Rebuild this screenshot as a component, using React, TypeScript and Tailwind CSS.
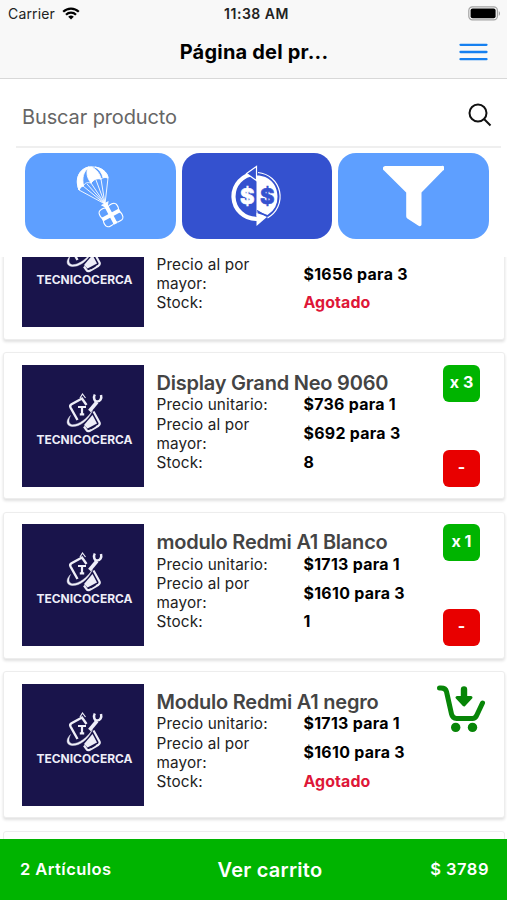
import React from 'react';

interface Product {
  id: number;
  name: string;
  unitPrice: string;
  bulkPrice: string;
  stock: number;
  quantity: number;
}

const PRODUCTS: Product[] = [
  { id: 1, name: '', unitPrice: '', bulkPrice: '$1656 para 3', stock: 0, quantity: 0 },
  { id: 2, name: 'Display Grand Neo 9060', unitPrice: '$736 para 1', bulkPrice: '$692 para 3', stock: 8, quantity: 3 },
  { id: 3, name: 'modulo Redmi A1 Blanco', unitPrice: '$1713 para 1', bulkPrice: '$1610 para 3', stock: 1, quantity: 1 },
  { id: 4, name: 'Modulo Redmi A1 negro', unitPrice: '$1713 para 1', bulkPrice: '$1610 para 3', stock: 0, quantity: 0 },
];

const WifiIcon = () => (
  <svg width="18" height="13" viewBox="0 0 18 13" fill="none" stroke="#000" strokeWidth="2.2">
    <path d="M1.2 4.8a11 11 0 0 1 15.6 0" />
    <path d="M4 7.8a7 7 0 0 1 10 0" />
    <path d="M9 12.6 6.2 9.8a4 4 0 0 1 5.6 0z" fill="#000" stroke="none" />
  </svg>
);

const BatteryIcon = () => (
  <svg width="33" height="15" viewBox="0 0 33 15">
    <rect x="0.8" y="0.8" width="28.6" height="13" rx="3.6" fill="#f8f8f8" stroke="#a3a3a3" strokeWidth="1.2" />
    <rect x="2.6" y="2.6" width="25" height="9.6" rx="2" fill="#000" />
    <path d="M30.8 5v5c1.4-.8 1.4-4.2 0-5z" fill="#8c8c8c" />
  </svg>
);

const MenuIcon = () => (
  <svg width="29" height="18" viewBox="0 0 29 18" stroke="#1680f0" strokeWidth="2.3" strokeLinecap="round">
    <path d="M1.500 1.800h26M1.500 9h26M1.500 16.200h26" />
  </svg>
);

const ParachuteIcon = () => (
  <svg width="50" height="64" viewBox="0 0 50 64" fill="none" stroke="#fff" strokeWidth="0.9">
    {/* canopy */}
    <path d="M4 26C-1 13 6 4 15 3c10-1 18 5 18 11-3-1-5-.5-7 1-4-1-7 0-10 4-4-1-6 0-8 3-2 0-3 2-4 4z" />
    <path d="M4 26C-1 13 6 4 14 3 8 8 7 14 8.500 22c-2 0-3.500 2-4.500 4z" fill="#fff" />
    <path d="M13 3h4c5 3 8 7 9 12-4-1-7 0-10 4-4-5-5-10-3-16z" fill="#fff" />
    <path d="M20 3c7 1 12 5 13 11-2-1-3.500-1-5-.5C27 9 24 5 20 3z" fill="#fff" />
    {/* ropes */}
    <path d="M4 26l26 14M8 22l22 18M12 20l18 20M16 19l14 21M21 16l9 24M26 15l4 25M33 14l-3 26" />
    {/* parcel */}
    <g transform="rotate(-28 36 51)">
      <rect x="26" y="41.500" width="10" height="9.500" rx="4" strokeWidth="1.200" />
      <rect x="36" y="41.500" width="10" height="9.500" rx="4" strokeWidth="1.200" />
      <rect x="26" y="51" width="10" height="9.500" rx="4" strokeWidth="1.200" />
      <rect x="36" y="51" width="10" height="9.500" rx="4" strokeWidth="1.200" />
      <path d="M36 40v21M26 51h20" strokeWidth="4" />
      <path d="M36 43l-3.500-5h7z" fill="#fff" />
    </g>
  </svg>
);

const ExchangeIcon = () => (
  <svg width="52" height="62" viewBox="0 0 52 62" fill="none">
    <path d="M26 10.500c12 0 20.500 9 20.500 21a21 21 0 0 1-10 18.500L26 46z" fill="#fff" />
    <path d="M24 8.800a22.500 22.500 0 0 0 2 45" stroke="#fff" strokeWidth="4.200" />
    <path d="M25.500 48v13l11-9.500z" fill="#fff" />
    <path d="M26 11v40" stroke="#fff" />
    <path d="M27 7.500a24.300 24.300 0 0 1 9.500 45.500" stroke="#fff" strokeWidth="1.200" />
    <path d="M26 45.500l10 6" stroke="#3451cf" strokeWidth="1.200" />
    <path d="M25.500 1.500v14l-10-7z" fill="#3451cf" stroke="#fff" strokeWidth="1.200" />
    <text x="9" y="39" fontFamily="Inter, sans-serif" fontWeight="800" fontSize="22" fill="#fff" stroke="#fff" strokeWidth=".6">$</text>
    <text x="29" y="39" fontFamily="Inter, sans-serif" fontWeight="800" fontSize="22" fill="#3451cf" stroke="#3451cf" strokeWidth=".6">$</text>
  </svg>
);

const FunnelIcon = () => (
  <svg width="61" height="62" viewBox="0 0 61 62" fill="#fff">
    <path d="M2.600 1H58.400a2.300 2.300 0 0 1 1.600 4.600L38.500 27.500V59.500a1.800 1.800 0 0 1-3 1.300L24.300 53.500a3 3 0 0 1-1.100-2.300V27.500L1 5.600A2.500 2.500 0 0 1 2.600 1z" />
  </svg>
);

const CartDownIcon = () => (
  <svg width="50" height="50" viewBox="0 0 50 50" fill="none" stroke="#078507" strokeWidth="5" strokeLinecap="round" strokeLinejoin="round">
    <path d="M3.500 4h1.500q4.600 0 5.500 3.600l5 22.400q1 4.400 5 4.400h16q2.600 0 4-2.600L46.500 19" />
    <path d="M28 5.500v9" strokeWidth="6.400" />
    <path d="M21 13.500h14L28 21z" fill="#078507" strokeWidth="3" />
    <circle cx="19.700" cy="43.400" r="4.700" fill="#078507" stroke="none" />
    <circle cx="36.500" cy="43.400" r="4.700" fill="#078507" stroke="none" />
  </svg>
);

const BrandImage = () => (
  <svg width="122" height="122" viewBox="0 0 122 122" className="shrink-0 bg-[#19144b]" fill="none" stroke="#eeeef8">
    {/* phone */}
    <path d="M55.500 55L48.500 42.500q-1-2 1-3.200L60 33.500L64.500 40" strokeWidth="2.400" />
    <path d="M58 33l2.500-4 3 4" strokeWidth="1.200" />
    <path d="M71.500 46.500l6 11q.8 2-1 3.200L67.500 66q-2 .8-3-1L62 61.500" strokeWidth="2.200" />
    <path d="M62 60l8.500-10 4.500 8.500-9.500 5z" fill="#eeeef8" stroke="none" />
    <path d="M68.500 64l5-3" stroke="#19144b" strokeWidth="1.200" />
    <path d="M56 42h8M60 42.500v7M57.800 49.300h4.400" strokeWidth="2.200" />
    {/* wrench */}
    <path d="M75 37L67.500 46" strokeWidth="3.600" />
    <path d="M72.800 29.500c-1.700 3-.5 6.800 2.200 7 3.200.2 5-3 4-6.500" strokeWidth="2.500" />
    {/* orbit */}
    <path d="M48.500 50.500c-5 5-4.500 10.500 1.500 11C57.500 62 66 56 70.500 45.500 65 54 57 59.500 50.500 59.800c-4-.5-4.500-4.500-2-9.300z" fill="#eeeef8" strokeWidth=".4" />
    <text x="14.500" y="78.600" textLength="96" lengthAdjust="spacingAndGlyphs" fontFamily="Inter, sans-serif" fontWeight="700" fontSize="11.500" fill="#eeeef8" stroke="none">TECNICOCERCA</text>
  </svg>
);

const ProductCard: React.FC<{ product: Product }> = ({ product }) => (
  <div className="mb-[12.5px] flex h-[147px] shrink-0 rounded-[3px] border border-[#ededed] bg-white pt-[11.5px] pr-[24px] pl-[17.5px] shadow-[0_2px_3px_rgba(0,0,0,0.12)]">
    <BrandImage />
    <div className="ml-[13px] w-[285px] pt-[7px] text-[15.300px] leading-[19.100px] tracking-[0.15px] text-[#222]">
      <h2 className="h-[23.500px] text-[20px] leading-[23.500px] font-semibold tracking-[-0.220px] whitespace-nowrap text-[#444]">{product.name}</h2>
      <div className="grid grid-cols-[147px_1fr] items-center">
        <span>{product.unitPrice ? 'Precio unitario:' : '\u00a0'}</span>
        <span className="text-[15.900px] font-bold tracking-[0.300px] text-black">{product.unitPrice}</span>
        <span className="w-[110px]">Precio al por mayor:</span>
        <span className="text-[15.900px] font-bold tracking-[0.300px] text-black">{product.bulkPrice}</span>
        <span>Stock:</span>
        {product.stock > 0 ? (
          <span className="text-[15.900px] font-bold text-black">{product.stock}</span>
        ) : (
          <span className="text-[15.900px] font-bold tracking-[0.100px] text-[#de1738]">Agotado</span>
        )}
      </div>
    </div>
    {product.quantity > 0 ? (
      <div className="ml-auto flex h-[122px] flex-col justify-between text-[16px] font-bold text-white">
        <span className="flex h-[37px] w-[37px] items-center justify-center rounded-[6px] bg-[#00b400] pb-[3px]">x {product.quantity}</span>
        <button className="flex h-[37px] w-[37px] items-center justify-center rounded-[6px] bg-[#e80000] pb-[3px]">-</button>
      </div>
    ) : (
      <button className="-mr-[6px] ml-auto h-[50px]">
        <CartDownIcon />
      </button>
    )}
  </div>
);

const App: React.FC = () => {
  return (
    <div className="flex h-[900px] w-[507px] flex-col overflow-hidden bg-white font-['Inter',sans-serif]">
      <header className="h-[79px] shrink-0 border-b border-[#d8d8d8] bg-[#f8f8f8]">
        <div className="grid h-[27px] grid-cols-3 items-center pr-[6px] pl-[8px] text-[14px] text-[#222]">
          <div className="flex items-center gap-[7px]">
            <span className="tracking-[0.150px]">Carrier</span>
            <WifiIcon />
          </div>
          <span className="pl-[4px] text-center font-semibold tracking-[0.500px]">11:38 AM</span>
          <div className="flex justify-end">
            <BatteryIcon />
          </div>
        </div>
        <div className="grid h-[50px] grid-cols-[1fr_auto_1fr] items-center">
          <span />
          <h1 className="pl-px text-[20px] font-bold tracking-[0.200px] text-black">Página del pr...</h1>
          <button className="mr-[19px] justify-self-end">
            <MenuIcon />
          </button>
        </div>
      </header>

      {/* Search */}
      <div className="mr-[6px] ml-[16px] flex h-[69px] shrink-0 items-center justify-between border-b-2 border-[#efefef] pt-[8px] pr-[9px] pl-[6px]">
        <span className="text-[20px] tracking-[-0.120px] text-[#666]">Buscar producto</span>
        <svg width="24" height="24" viewBox="0 0 24 24" fill="none" stroke="#111" strokeWidth="2" className="mb-[4px]">
          <circle cx="10" cy="10" r="8.500" />
          <path d="M16 16l6.500 6.500" />
        </svg>
      </div>

      {/* Category buttons */}
      <div className="flex h-[109px] shrink-0 gap-[6px] pt-[5px] pl-[25px]">
        <button className="flex h-[86px] w-[150.500px] items-center justify-center rounded-[18px] bg-[#5e9fff]">
          <ParachuteIcon />
        </button>
        <button className="flex h-[86px] w-[150.500px] items-center justify-center rounded-[18px] bg-[#3451cf]">
          <ExchangeIcon />
        </button>
        <button className="flex h-[86px] w-[150.500px] items-center justify-center rounded-[18px] bg-[#5e9fff]">
          <FunnelIcon />
        </button>
      </div>

      {/* Product list, scrolled partway through the first card */}
      <main className="min-h-0 flex-1 overflow-hidden pr-[2px] pl-[3px]">
        <div className="-mt-[64.100px] flex flex-col">
          {PRODUCTS.map((product) => (
            <ProductCard key={product.id} product={product} />
          ))}
          <div className="h-[20px] shrink-0 rounded-[3px] border border-[#ededed] bg-white" />
        </div>
      </main>

      <footer className="grid h-[61px] shrink-0 grid-cols-3 items-center bg-[#00b400] pr-[18px] pl-[20px] font-semibold text-white">
        <span className="text-[16.500px] tracking-[0.450px]">2 Artículos</span>
        <span className="pl-[31px] text-center text-[20px] tracking-[0.250px]">Ver carrito</span>
        <span className="text-right text-[16.500px] tracking-[0.500px]">$ 3789</span>
      </footer>
    </div>
  );
};

export default App;
